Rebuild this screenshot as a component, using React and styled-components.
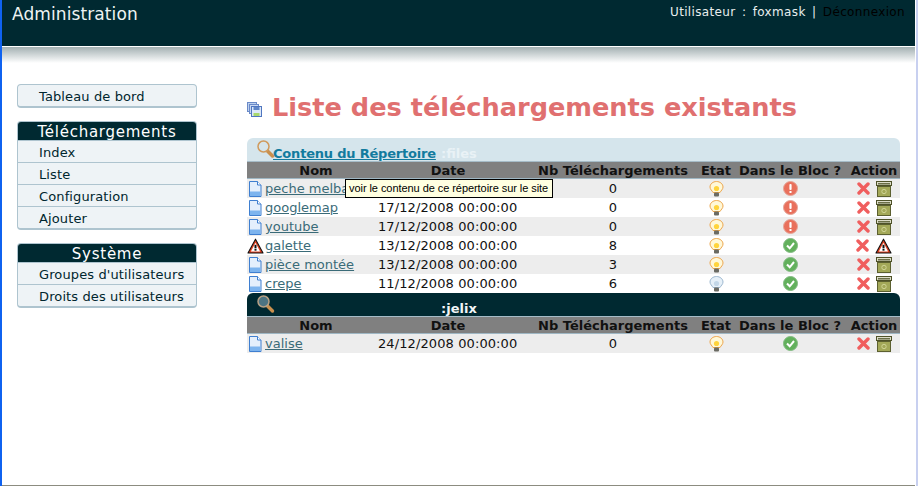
import React from "react";
import styled, { createGlobalStyle } from "styled-components";

const Global = createGlobalStyle`
  html, body { margin: 0; padding: 0; background: #fff; }
  body { font-family: "DejaVu Sans", Verdana, sans-serif; }
  * { box-sizing: border-box; }
`;

const Page = styled.div`
  width: 918px;
  height: 486px;
  overflow: hidden;
  display: flex;
  background: #fff;
`;
const EdgeLeft = styled.div`
  width: 2px;
  background: #0f62f0;
`;
const EdgeRight = styled.div`
  width: 3px;
  border-left: 1px solid #fff;
  background: #c8d0f0;
`;
const Shell = styled.div`
  flex: 1;
  min-width: 0;
  border-bottom: 1px solid #8c8c80;
`;
const Header = styled.header`
  height: 46px;
  background: #002931;
  display: flex;
  justify-content: space-between;
  align-items: flex-start;
  color: #fff;
`;
const Brand = styled.div`
  font-size: 17px;
  line-height: 18px;
  margin: 5px 0 0 10px;
  color: #eef3f3;
  letter-spacing: 0.1px;
`;
const UserBar = styled.div`
  font-size: 12px;
  line-height: 14px;
  margin: 5px 10px 0 0;
  color: #e8eeee;
  letter-spacing: 0.35px;
  word-spacing: 2.2px;
`;
const Logout = styled.span`
  color: #000;
`;
const Shade = styled.div`
  height: 16px;
  margin-top: 1px;
  background: linear-gradient(#a3b0b2, #fff);
`;
const Main = styled.div`
  display: flex;
  align-items: flex-start;
`;
const Sidebar = styled.nav`
  width: 180px;
  margin: 21px 0 0 15px;
  display: flex;
  flex-direction: column;
  gap: 13px;
`;
const MenuBox = styled.div`
  border: 1px solid #aec4cf;
  border-bottom-width: 2px;
  border-radius: 4px;
  background: #eef3f6;
  overflow: hidden;
`;
const MenuTitle = styled.div`
  background: #002931;
  color: #fff;
  height: 18px;
  line-height: 21px;
  font-size: 15px;
  text-align: center;
  letter-spacing: 0.75px;
`;
const MenuItem = styled.div`
  height: 22px;
  line-height: 24px;
  font-size: 13px;
  padding-left: 21px;
  color: #00262e;
  letter-spacing: 0.12px;
  border-top: 1px solid #aec4cf;
`;
const SoloItem = styled(MenuItem)`
  height: 21px;
  line-height: 24px;
  border-top: 0;
`;
const Content = styled.section`
  width: 653px;
  margin-left: 50px;
`;
const TitleRow = styled.div`
  height: 75px;
  display: flex;
  align-items: center;
  gap: 10px;
  padding-top: 13px;
`;
const Title = styled.h1`
  margin: 0;
  font-size: 25.6px;
  font-weight: bold;
  color: #e07070;
  line-height: 34px;
`;
const Board = styled.div`
  position: relative;
`;
const Caption = styled.div`
  height: 24px;
  background: ${(p) => (p.$dark ? "#002931" : "#d5e5ec")};
  border-radius: 6px 6px 0 0;
  border-bottom: 1px solid #a6bcc8;
  display: flex;
  align-items: flex-end;
  padding-left: 10px;
  font-size: 13px;
  font-weight: bold;
  line-height: 15px;
`;
const DirLink = styled.a`
  display: flex;
  align-items: flex-end;
  color: #127b9e;
  text-decoration: underline;
  width: 179px;
  height: 23px;
  line-height: 15px;
  letter-spacing: -0.2px;
  white-space: nowrap;
`;
const LensSlot = styled.span`
  display: flex;
  align-items: flex-start;
  width: ${(p) => (p.$wide ? "184px" : "16px")};
  height: 23px;
  padding-top: 2px;
`;
const DirOwner = styled.span`
  color: ${(p) => (p.$dark ? "#f2f6f7" : "#e9f2f6")};
  margin-left: ${(p) => (p.$dark ? 0 : 5)}px;
`;
const Row = styled.div`
  display: grid;
  grid-template-columns: 130px 149px 174px 32px 116px 52px;
  height: 19px;
  align-items: center;
  background: ${(p) => (p.$alt ? "#ededed" : "#fff")};
  font-size: 13px;
  color: #111;
`;
const HeadRow = styled(Row)`
  height: 17px;
  background: #808080;
  color: #111;
  font-weight: bold;
  border-bottom: 1px solid #9fb7c4;
  white-space: nowrap;
`;
const HeadCell = styled.div`
  text-align: center;
  display: flex;
  justify-content: center;
  padding-left: ${(p) => p.$pl || 0}px;
  padding-right: ${(p) => p.$pr || 0}px;
  line-height: 15px;
`;
const NameCell = styled.div`
  display: flex;
  align-items: center;
  gap: 3px;
  padding-left: 1px;
  white-space: nowrap;
`;
const IconSlot = styled.span`
  width: 14px;
  display: flex;
  justify-content: center;
  flex: none;
`;
const NameLink = styled.a`
  color: #3a6b78;
  text-decoration: underline;
`;
const DateCell = styled.div`
  white-space: nowrap;
  padding-left: 1px;
  letter-spacing: 0.1px;
`;
const CenterCell = styled.div`
  display: flex;
  justify-content: center;
  align-items: center;
  gap: 6px;
  white-space: nowrap;
`;
const Tooltip = styled.div`
  position: absolute;
  left: 98px;
  top: 41px;
  width: 208px;
  height: 19px;
  background: #ffffe1;
  border: 1px solid #000;
  font-family: "Liberation Sans", Arial, sans-serif;
  font-size: 11px;
  line-height: 17px;
  padding-left: 3px;
  color: #000;
  letter-spacing: -0.06px;
  white-space: nowrap;
`;
const Glyph = styled.svg`
  display: block;
  flex: none;
`;
const DiskGlyph = styled(Glyph)`
  margin-top: 5px;
`;

const FileIcon = () => (
  <Glyph width="14" height="16" viewBox="0 0 14 16">
    <path d="M1.500.5h8l3.500 3.500v11.500H1.500z" fill="#e4effc" stroke="#3f7fd0" />
    <path d="M9.500.5v3.500H13" fill="#fff" stroke="#3f7fd0" />
    <rect x="2" y="10.500" width="10.500" height="4.500" fill="#7db4ee" />
  </Glyph>
);
const WarnIcon = () => (
  <Glyph width="17" height="16" viewBox="0 0 17 16">
    <path d="M8.500 1.200 16 15H1z" fill="#e2401f" stroke="#111" strokeWidth="1.100" strokeLinejoin="round" />
    <path d="M8.500 4.800 13.100 13.500H3.900z" fill="#fff" />
    <rect x="7.500" y="6.800" width="2" height="3.600" fill="#111" />
    <rect x="7.500" y="11" width="2" height="1.700" fill="#111" />
  </Glyph>
);
const Bulb = ({ off }) => (
  <Glyph width="15" height="16" viewBox="0 0 15 16">
    <path
      d="M7.500.5c3.600 0 6.500 2.500 6.500 5.500 0 2.300-2 3.600-3 5.500H4C3 9.600 1 8.300 1 6 1 3 3.900.5 7.500.5z"
      fill={off ? "#e6f0f8" : "#fff8d8"}
      stroke={off ? "#9db8d0" : "#eda64c"}
    />
    <circle cx="7.500" cy="7.500" r="2.600" fill={off ? "#c3d7e8" : "#ffd43c"} />
    <rect x="5" y="11.500" width="5" height="4" rx="1" fill="#6a6a62" />
  </Glyph>
);
const AlertDot = () => (
  <Glyph width="15" height="15" viewBox="0 0 15 15">
    <circle cx="7.500" cy="7.500" r="7" fill="#e9705c" stroke="#e5a598" />
    <rect x="6.400" y="3" width="2.200" height="6" rx="1" fill="#fff" />
    <rect x="6.500" y="10" width="2" height="2" fill="#fff" />
  </Glyph>
);
const OkDot = () => (
  <Glyph width="15" height="15" viewBox="0 0 15 15">
    <circle cx="7.500" cy="7.500" r="7" fill="#62b05c" stroke="#82ba82" />
    <path d="M4 7.500 6.700 10.300 11 5" fill="none" stroke="#fff" strokeWidth="2" />
  </Glyph>
);
const Cross = () => (
  <Glyph width="13" height="13" viewBox="0 0 13 13">
    <path d="M2 2 11 11M11 2 2 11" stroke="#f05e5e" strokeWidth="3.400" strokeLinecap="round" />
  </Glyph>
);
const Bin = () => (
  <Glyph width="16" height="16" viewBox="0 0 16 16">
    <rect x="1.500" y="5.500" width="13" height="10" fill="#a3a858" stroke="#5c6030" />
    <rect x=".5" y=".5" width="15" height="4" fill="#dcdcc8" stroke="#4e5228" />
    <rect x="2" y="2" width="12" height="1.500" fill="#6b6f48" />
    <circle cx="8" cy="10.500" r="2.200" fill="none" stroke="#cfd394" />
  </Glyph>
);
const Lens = ({ dark }) => (
  <Glyph width="18" height="19" viewBox="0 0 18 19">
    <path d="M10 10.500 15.500 16" stroke="#c9904e" strokeWidth="3.500" strokeLinecap="round" />
    <circle cx="6.500" cy="6.500" r="5.500" fill={dark ? "#4d7482" : "#d5e5ec"} stroke={dark ? "#b8a184" : "#d09a5c"} strokeWidth="1.500" />
  </Glyph>
);
const Disks = () => (
  <DiskGlyph width="15" height="15" viewBox="0 0 15 15">
    <rect x=".5" y=".5" width="9" height="9" fill="#bcd0ee" stroke="#6a8ac8" />
    <rect x="2.500" y="2.500" width="9" height="9" fill="#c8d8f2" stroke="#6a8ac8" />
    <rect x="4.500" y="4.500" width="10" height="10" fill="#dce8f8" stroke="#4f76c0" />
    <rect x="6.500" y="5" width="6" height="3" fill="#5f86c8" />
    <rect x="6.500" y="11" width="6" height="3" fill="#a8d86c" />
  </DiskGlyph>
);

const firstRows = [
  { name: "peche melba", date: "17/12/2008 00:00:00", nb: 0, ok: false },
  { name: "googlemap", date: "17/12/2008 00:00:00", nb: 0, ok: false },
  { name: "youtube", date: "17/12/2008 00:00:00", nb: 0, ok: false },
  { name: "galette", date: "13/12/2008 00:00:00", nb: 8, ok: true, warn: true },
  { name: "pièce montée", date: "13/12/2008 00:00:00", nb: 3, ok: true },
  { name: "crepe", date: "11/12/2008 00:00:00", nb: 6, ok: true, off: true },
];
const secondRows = [{ name: "valise", date: "24/12/2008 00:00:00", nb: 0, ok: true }];

const ColumnHead = () => (
  <HeadRow>
    <HeadCell $pl={8}>Nom</HeadCell>
    <HeadCell $pr={7}>Date</HeadCell>
    <HeadCell>Nb Téléchargements</HeadCell>
    <HeadCell>Etat</HeadCell>
    <HeadCell>Dans le Bloc ?</HeadCell>
    <HeadCell>Action</HeadCell>
  </HeadRow>
);

const Lines = ({ rows }) =>
  rows.map((r, i) => (
    <Row key={r.name} $alt={i % 2 === 0}>
      <NameCell>
        <IconSlot>{r.warn ? <WarnIcon /> : <FileIcon />}</IconSlot>
        <NameLink>{r.name}</NameLink>
      </NameCell>
      <DateCell>{r.date}</DateCell>
      <CenterCell>{r.nb}</CenterCell>
      <CenterCell>
        <Bulb off={r.off} />
      </CenterCell>
      <CenterCell>{r.ok ? <OkDot /> : <AlertDot />}</CenterCell>
      <CenterCell>
        <Cross />
        {r.warn ? <WarnIcon /> : <Bin />}
      </CenterCell>
    </Row>
  ));

export default function App() {
  return (
    <Page>
      <Global />
      <EdgeLeft />
      <Shell>
        <Header>
          <Brand>Administration</Brand>
          <UserBar>
            Utilisateur : foxmask | <Logout>Déconnexion</Logout>
          </UserBar>
        </Header>
        <Shade />
        <Main>
          <Sidebar>
            <MenuBox>
              <SoloItem>Tableau de bord</SoloItem>
            </MenuBox>
            <MenuBox>
              <MenuTitle>Téléchargements</MenuTitle>
              <MenuItem>Index</MenuItem>
              <MenuItem>Liste</MenuItem>
              <MenuItem>Configuration</MenuItem>
              <MenuItem>Ajouter</MenuItem>
            </MenuBox>
            <MenuBox>
              <MenuTitle>Système</MenuTitle>
              <MenuItem>Groupes d'utilisateurs</MenuItem>
              <MenuItem>Droits des utilisateurs</MenuItem>
            </MenuBox>
          </Sidebar>
          <Content>
            <TitleRow>
              <Disks />
              <Title>Liste des téléchargements existants</Title>
            </TitleRow>
            <Board>
              <Caption>
                <DirLink>
                  <LensSlot>
                    <Lens />
                  </LensSlot>
                  Contenu du Répertoire
                </DirLink>
                <DirOwner>:files</DirOwner>
              </Caption>
              <ColumnHead />
              <Lines rows={firstRows} />
              <Caption $dark>
                <LensSlot $wide>
                  <Lens dark />
                </LensSlot>
                <DirOwner $dark>:jelix</DirOwner>
              </Caption>
              <ColumnHead />
              <Lines rows={secondRows} />
              <Tooltip>voir le contenu de ce répertoire sur le site</Tooltip>
            </Board>
          </Content>
        </Main>
      </Shell>
      <EdgeRight />
    </Page>
  );
}
